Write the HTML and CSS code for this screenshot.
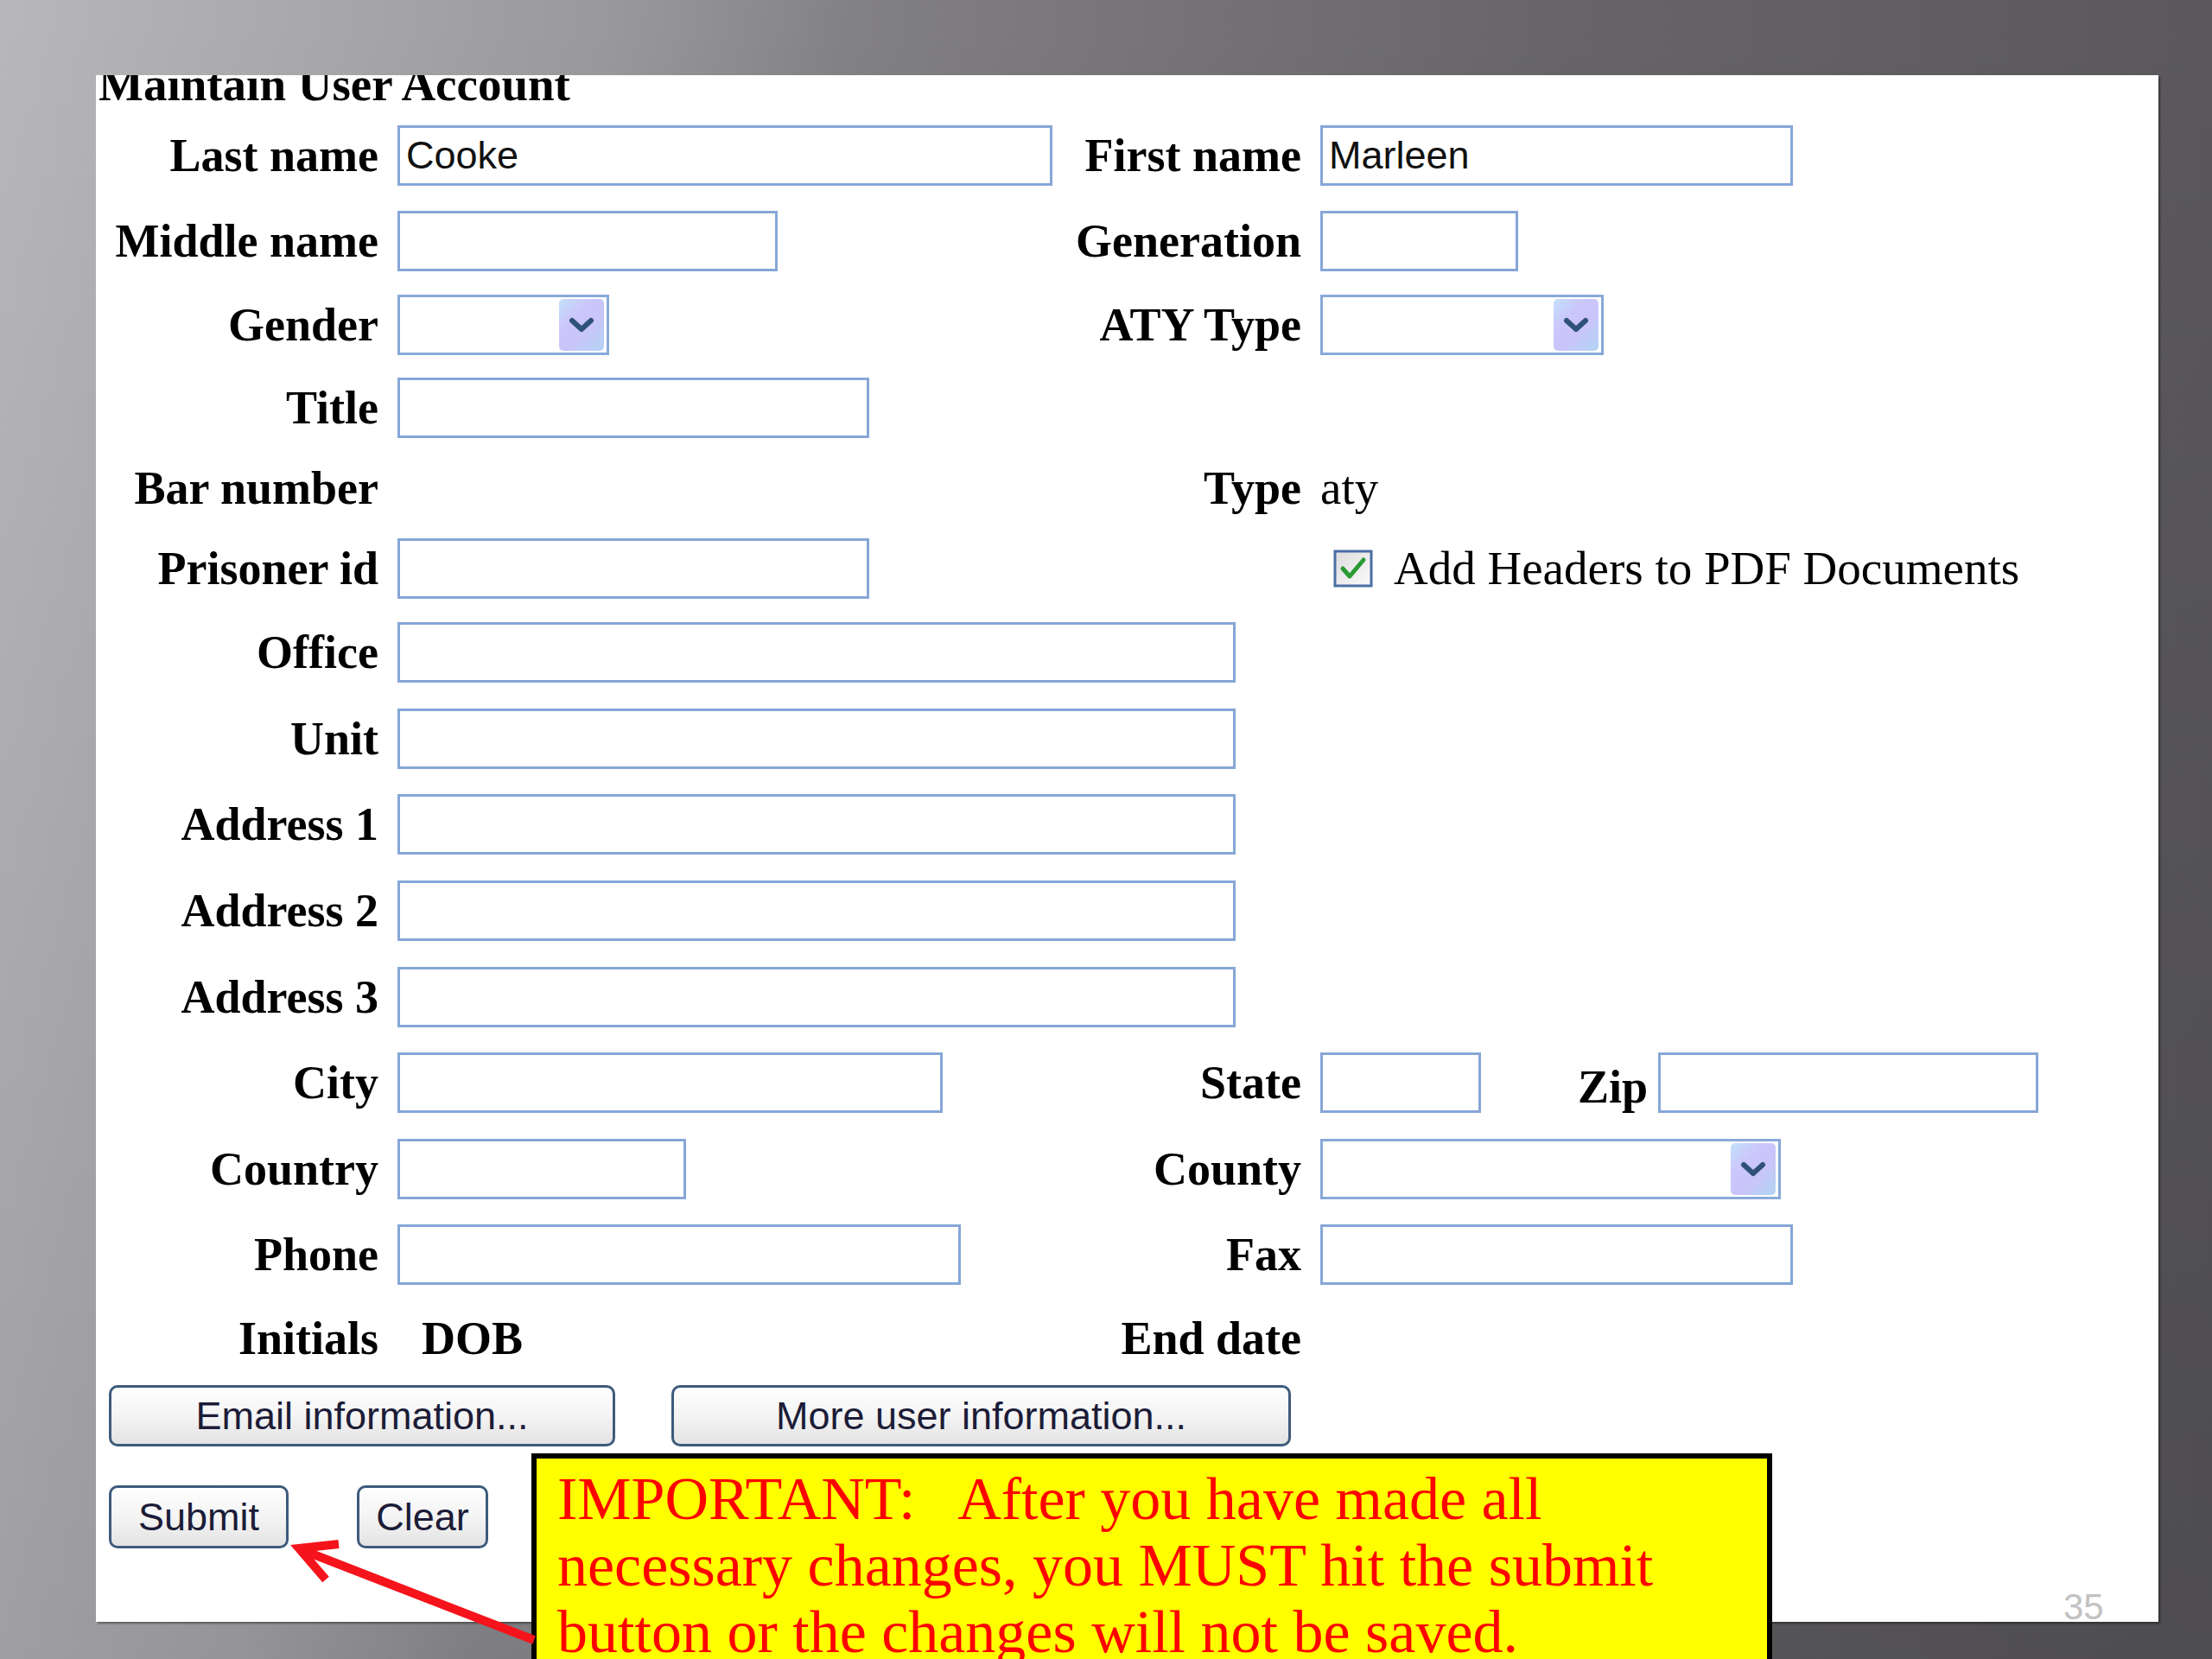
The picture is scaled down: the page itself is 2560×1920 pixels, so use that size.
FILE: index.html
```html
<!DOCTYPE html>
<html lang="en">
<head>
    <meta charset="UTF-8">
    <title>Maintain User Account</title>
    <link rel="stylesheet" href="styles.css">
</head>
<body>
    <div class="slide">
        <div class="panel">
            <h1 class="page-title">Maintain User Account</h1>

            <div class="form-grid">
                <!-- row 1 -->
                <label class="lbl">Last name</label>
                <div class="fld"><input type="text" class="txt" style="width:758px" value="Cooke"></div>
                <label class="lbl">First name</label>
                <div class="fld"><input type="text" class="txt" style="width:547px" value="Marleen"></div>

                <!-- row 2 -->
                <label class="lbl">Middle name</label>
                <div class="fld"><input type="text" class="txt" style="width:440px"></div>
                <label class="lbl">Generation</label>
                <div class="fld"><input type="text" class="txt" style="width:229px"></div>

                <!-- row 3 -->
                <label class="lbl">Gender</label>
                <div class="fld">
                    <div class="sel" style="width:245px">
                        <span class="sel-btn"><svg width="30" height="20" viewBox="0 0 30 20"><path d="M4 5 L15 15 L26 5" fill="none" stroke="#2f5178" stroke-width="6" stroke-linecap="round" stroke-linejoin="round"/></svg></span>
                    </div>
                </div>
                <label class="lbl">ATY Type</label>
                <div class="fld">
                    <div class="sel" style="width:328px">
                        <span class="sel-btn"><svg width="30" height="20" viewBox="0 0 30 20"><path d="M4 5 L15 15 L26 5" fill="none" stroke="#2f5178" stroke-width="6" stroke-linecap="round" stroke-linejoin="round"/></svg></span>
                    </div>
                </div>

                <!-- row 4 -->
                <label class="lbl">Title</label>
                <div class="fld"><input type="text" class="txt" style="width:546px"></div>
                <div></div>
                <div></div>

                <!-- row 5 -->
                <label class="lbl">Bar number</label>
                <div></div>
                <label class="lbl">Type</label>
                <div class="fld plain">aty</div>

                <!-- row 6 -->
                <label class="lbl">Prisoner id</label>
                <div class="fld"><input type="text" class="txt" style="width:546px"></div>
                <div></div>
                <div class="fld check-row">
                    <svg class="chk" width="46" height="44" viewBox="0 0 46 44">
                        <defs>
                            <linearGradient id="chkbg" x1="0" y1="0" x2="1" y2="1">
                                <stop offset="0" stop-color="#dcdcdc"/>
                                <stop offset="1" stop-color="#fbfbfb"/>
                            </linearGradient>
                        </defs>
                        <rect x="2" y="2" width="42" height="40" fill="url(#chkbg)" stroke="#4a6fa3" stroke-width="3"/>
                        <path d="M11 22 L19 31 L35 12" fill="none" stroke="#2a9a34" stroke-width="5" stroke-linecap="round" stroke-linejoin="round"/>
                    </svg>
                    <span class="plain">Add Headers to PDF Documents</span>
                </div>

                <!-- rows 7-11 -->
                <label class="lbl">Office</label>
                <div class="fld wide"><input type="text" class="txt" style="width:970px"></div>
                <div></div>

                <label class="lbl">Unit</label>
                <div class="fld wide"><input type="text" class="txt" style="width:970px"></div>
                <div></div>

                <label class="lbl">Address 1</label>
                <div class="fld wide"><input type="text" class="txt" style="width:970px"></div>
                <div></div>

                <label class="lbl">Address 2</label>
                <div class="fld wide"><input type="text" class="txt" style="width:970px"></div>
                <div></div>

                <label class="lbl">Address 3</label>
                <div class="fld wide"><input type="text" class="txt" style="width:970px"></div>
                <div></div>

                <!-- row 12 -->
                <label class="lbl">City</label>
                <div class="fld"><input type="text" class="txt" style="width:631px"></div>
                <label class="lbl">State</label>
                <div class="fld zip-row">
                    <input type="text" class="txt" style="width:186px">
                    <label class="lbl zip-lbl">Zip</label>
                    <input type="text" class="txt" style="width:440px">
                </div>

                <!-- row 13 -->
                <label class="lbl">Country</label>
                <div class="fld"><input type="text" class="txt" style="width:334px"></div>
                <label class="lbl">County</label>
                <div class="fld">
                    <div class="sel" style="width:533px">
                        <span class="sel-btn"><svg width="30" height="20" viewBox="0 0 30 20"><path d="M4 5 L15 15 L26 5" fill="none" stroke="#2f5178" stroke-width="6" stroke-linecap="round" stroke-linejoin="round"/></svg></span>
                    </div>
                </div>

                <!-- row 14 -->
                <label class="lbl">Phone</label>
                <div class="fld"><input type="text" class="txt" style="width:652px"></div>
                <label class="lbl">Fax</label>
                <div class="fld"><input type="text" class="txt" style="width:547px"></div>

                <!-- row 15 -->
                <label class="lbl">Initials</label>
                <div class="fld"><span class="lbl dob">DOB</span></div>
                <label class="lbl">End date</label>
                <div></div>
            </div>

            <div class="btn-row">
                <button class="btn btn-email">Email information...</button>
                <button class="btn btn-more">More user information...</button>
            </div>

            <div class="btn-row submit-row">
                <button class="btn btn-submit">Submit</button>
                <button class="btn btn-clear">Clear</button>
            </div>

            <div class="slide-num">35</div>
        </div>

        <div class="callout">
            IMPORTANT:&nbsp;&nbsp; After you have made all<br>
            necessary changes, you MUST hit the submit<br>
            button or the changes will not be saved.
        </div>

        <svg class="arrow" width="320" height="150" viewBox="330 1770 320 150">
            <path d="M618 1898 L350 1794" fill="none" stroke="#f5141b" stroke-width="10"/>
            <path d="M392 1787 L346 1792 L377 1828" fill="none" stroke="#f5141b" stroke-width="10" stroke-linejoin="miter"/>
        </svg>
    </div>
</body>
</html>
```

FILE: styles.css
```css
html, body {
    margin: 0;
    padding: 0;
}
body {
    width: 2560px;
    height: 1920px;
    overflow: hidden;
    background:
        linear-gradient(103deg, rgba(255,255,255,0.16) 0%, rgba(255,255,255,0.10) 24%, rgba(255,255,255,0) 33%),
        linear-gradient(180deg, rgba(0,0,0,0) 0%, rgba(0,0,0,0.14) 100%),
        linear-gradient(90deg, #aaa9ae 0%, #939297 22%, #7c7a7f 45%, #67656a 70%, #5a585c 100%);
    font-family: "Liberation Serif", "Times New Roman", serif;
    color: #000;
}
.slide {
    position: relative;
    width: 2560px;
    height: 1920px;
}
.panel {
    position: relative;
    top: 87px;
    left: 111px;
    width: 2387px;
    height: 1790px;
    background: #fff;
    overflow: hidden;
    box-shadow: 2px 2px 2px rgba(0,0,0,0.4);
}
.page-title {
    margin: -14px 0 0 3px;
    font-size: 55px;
    line-height: 50px;
    font-weight: bold;
    white-space: nowrap;
}
.form-grid {
    display: grid;
    grid-template-columns: 327px 760px 264px auto;
    grid-template-rows: 99.6px 98.2px 96.8px 95.2px 91.4px 94.2px repeat(8, 99.6px) 94px;
    column-gap: 22px;
    margin-top: 7px;
}
.lbl {
    justify-self: end;
    align-self: center;
    font-size: 54px;
    font-weight: bold;
    white-space: nowrap;
    line-height: 60px;
}
.fld {
    align-self: center;
    display: flex;
    align-items: center;
}
.fld.wide {
    grid-column: 2 / span 2;
}
.plain {
    font-size: 55px;
    line-height: 60px;
    white-space: nowrap;
}
.txt {
    box-sizing: border-box;
    height: 70px;
    margin: 0;
    padding: 0 7px;
    border: 3px solid #86a6d6;
    border-radius: 0;
    background: #fff;
    font-family: "Liberation Sans", Arial, sans-serif;
    font-size: 45px;
    color: #111;
    outline: none;
}
.sel {
    box-sizing: border-box;
    height: 70px;
    border: 3px solid #89a9d8;
    background: #fff;
    display: flex;
    justify-content: flex-end;
    align-items: center;
    padding-right: 3px;
}
.sel-btn {
    width: 52px;
    height: 60px;
    border-radius: 5px;
    background: linear-gradient(135deg, #c3e0fa 0%, #cbc6fb 35%, #c9c5fa 60%, #b2d4f3 100%);
    display: flex;
    align-items: center;
    justify-content: center;
}
.check-row {
    padding-left: 15px;
    gap: 24px;
}
.chk {
    display: block;
}
.zip-row .zip-lbl {
    margin: 10px 12px 0 112px;
}
.dob {
    margin-left: 28px;
}
.btn-row {
    display: flex;
    gap: 65px;
    padding-left: 15px;
    margin-top: 7px;
}
.submit-row {
    gap: 79px;
    margin-top: 45px;
}
.btn {
    box-sizing: border-box;
    height: 71px;
    margin: 0;
    padding: 0;
    border: 3px solid #3d5b7c;
    border-radius: 10px;
    background: linear-gradient(180deg, #fefefe 0%, #f4f4f4 50%, #e3e3e3 100%);
    font-family: "Liberation Sans", Arial, sans-serif;
    font-size: 45px;
    color: #1c1c38;
    cursor: pointer;
}
.btn-email { width: 586px; }
.btn-more { width: 717px; }
.btn-submit { width: 208px; height: 73px; }
.btn-clear { width: 152px; height: 73px; }
.slide-num {
    position: absolute;
    left: 2277px;
    top: 1756px;
    font-family: "Liberation Sans", Arial, sans-serif;
    font-size: 42px;
    line-height: 34px;
    color: #c2c2c2;
}
.callout {
    position: absolute;
    left: 615px;
    top: 1682px;
    width: 1436px;
    height: 260px;
    box-sizing: border-box;
    border: 6px solid #000;
    background: #ffff00;
    padding: 8px 0 0 24px;
    font-family: "Liberation Serif", "Times New Roman", serif;
    font-size: 70px;
    line-height: 77px;
    color: #f00;
    white-space: nowrap;
}
.arrow {
    position: absolute;
    left: 330px;
    top: 1770px;
}
```
